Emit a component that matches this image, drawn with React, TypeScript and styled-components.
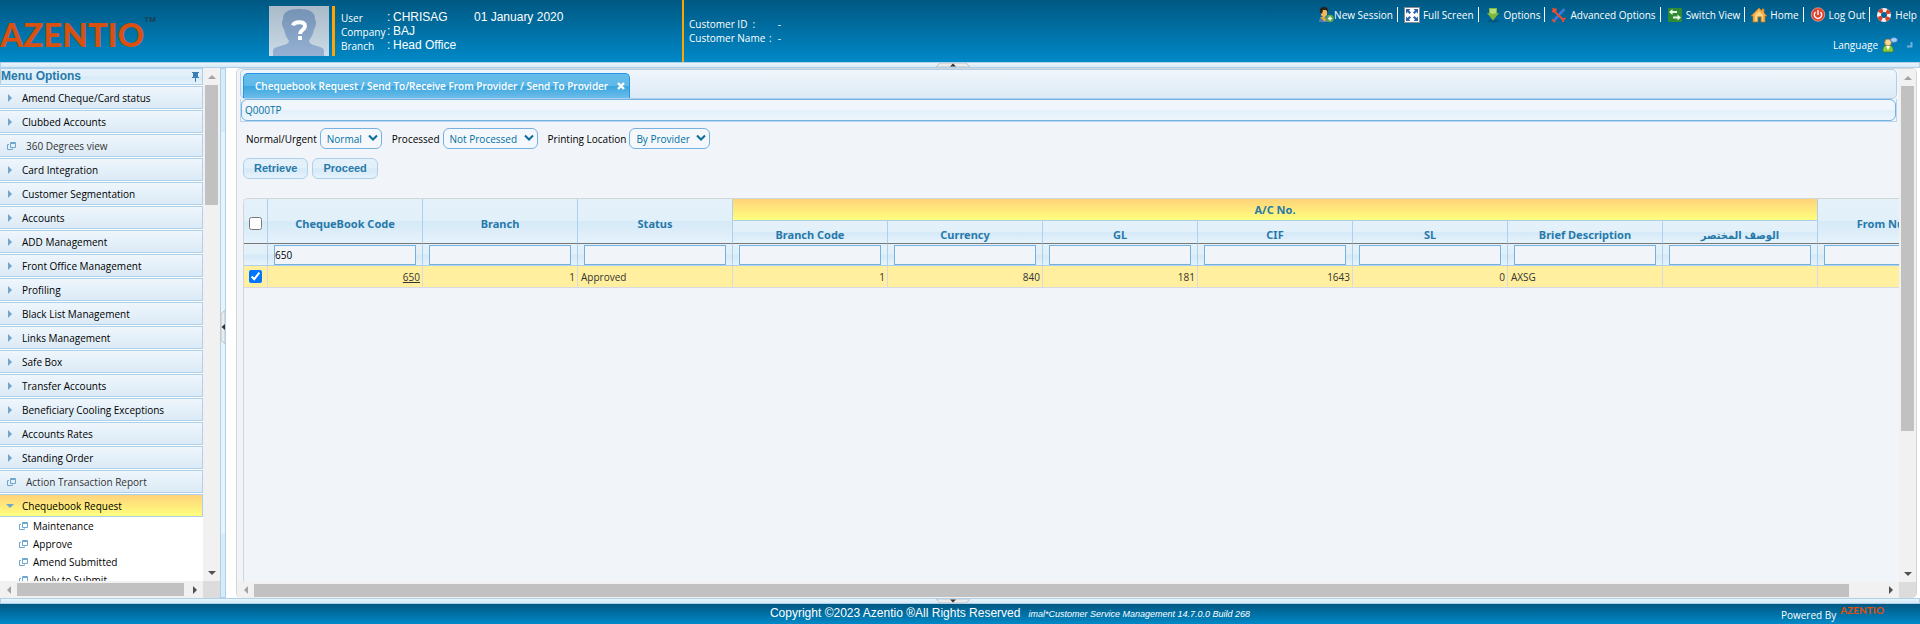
import React from "react";
import styled, { createGlobalStyle, css } from "styled-components";

const ui = `"Open Sans", "Noto Sans", sans-serif`;
const arial = `"Liberation Sans", Arial, sans-serif`;
const line = "#aed0ea";
const ink = "#2779aa";
const glass = "linear-gradient(#e4f1fb 0, #e2f0fa 48%, #d5e9f7 52%, #e6f3fc 100%)";
const bar = "linear-gradient(#005882, #0089c8)";
const hot = "linear-gradient(#ffd37a, #ffff7e)";

const Global = createGlobalStyle`
  * { box-sizing: border-box; }
  body { margin: 0; background: #fff; font: 10px/14px ${ui}; color: #000; }
  button, input, select { font: inherit; color: inherit; margin: 0; }
  a { color: inherit; text-decoration: none; }
  svg { display: block; flex: none; }
`;

const Page = styled.div`
  display: flex;
  flex-direction: column;
  height: 100vh;
  overflow: hidden;
`;

/* ---------- header ---------- */
const Header = styled.header`
  display: flex;
  height: 62px;
  flex: none;
  background: ${bar};
  color: #fff;
`;
const LogoArea = styled.div`
  display: flex;
  width: 269px;
  padding-top: 14px;
  color: #d9500f;
  font: 900 33px/40px Lato, sans-serif;
`;
const Trade = styled.span`
  color: #1d3f55;
  font: 700 8px/12px ${arial};
`;
const UserArea = styled.div`
  display: flex;
  gap: 3px;
  width: 413px;
  padding: 6px 0;
`;
const Accent = styled.div`
  width: 3px;
  background: #ffa500;
`;
const UserGrid = styled.dl`
  display: grid;
  grid-template-columns: 46px 6px 81px auto;
  grid-auto-rows: 14px;
  align-content: start;
  margin: 0;
  padding: 4px 0 0 3px;
  font: 12px/14px ${arial};
  dt { font: 500 10px/17px ${ui}; white-space: nowrap; }
  dd { margin: 0; white-space: nowrap; }
`;
const CustomerArea = styled.dl`
  display: grid;
  grid-template-columns: max-content 4px 8px;
  grid-auto-rows: 14px;
  column-gap: 3px;
  margin: 0;
  padding: 17px 0 0 5px;
  border-left: 2px solid #ffa500;
  font-weight: 500;
  dd { margin: 0; text-align: center; }
`;
const Tools = styled.div`
  display: flex;
  flex-direction: column;
  align-items: flex-end;
  margin-left: auto;
  padding: 7px 3px 0 0;
  font-weight: 500;
`;
const ToolRow = styled.nav`
  display: flex;
  height: 30px;
`;
const Tool = styled.a<{ $tight?: boolean }>`
  display: flex;
  align-items: center;
  gap: ${p => (p.$tight ? 0 : 3)}px;
  height: 15px;
  padding: 0 4px 0 6px;
  border-right: 1px solid #fff;
  white-space: nowrap;
  &:last-child { border: 0; padding-right: 0; }
`;
const LangRow = styled.a`
  display: flex;
  align-items: center;
  gap: 4px;
  padding-right: 4px;
`;

/* ---------- splitters ---------- */
const HSplit = styled.div`
  display: flex;
  justify-content: center;
  flex: none;
  height: 6px;
  padding-right: 14px;
  border: 1px solid ${line};
  background: linear-gradient(#eaf5fc, #d5e9f7);
`;
const VSplit = styled.div`
  display: flex;
  align-items: center;
  flex: none;
  width: 6px;
  padding-bottom: 12px;
  border: 1px solid ${line};
  background: linear-gradient(#d7ebf9 12%, #e8f4fc 12%, #e8f4fc 88%, #d7ebf9 88%);
`;

const Body = styled.div`
  display: flex;
  flex: 1;
  min-height: 0;
`;

/* ---------- scroll bars ---------- */
const Track = styled.div<{ $v?: boolean }>`
  display: flex;
  flex-direction: ${p => (p.$v ? "column" : "row")};
  align-items: center;
  min-width: 0;
  min-height: 0;
  background: #f1f1f1;
`;
const Thumb = styled.div<{ $v?: boolean; $share: number }>`
  background: #c1c1c1;
  ${p => (p.$v
    ? css`width: 13px; height: ${p.$share}%;`
    : css`height: 13px; width: ${p.$share}%;`)}
`;
const Run = styled.div<{ $v?: boolean }>`
  flex: 1;
  align-self: stretch;
  display: flex;
  flex-direction: ${p => (p.$v ? "column" : "row")};
  align-items: center;
`;
const ArrowBox = styled.div`
  display: grid;
  place-items: center;
  width: 17px;
  height: 17px;
  flex: none;
`;
const Corner = styled.div`
  background: #dcdcdc;
`;

/* ---------- menu ---------- */
const Side = styled.aside`
  display: grid;
  grid-template: minmax(0, 1fr) 17px / minmax(0, 1fr) 17px;
  flex: none;
  width: 220px;
`;
const MenuPane = styled.div`
  overflow: hidden;
`;
const MenuHead = styled.h2`
  display: flex;
  justify-content: space-between;
  align-items: center;
  height: 17px;
  margin: 0 0 1px;
  padding: 0 3px 0 0;
  border: 1px solid ${line};
  background: ${glass};
  color: ${ink};
  font: 700 12px/15px ${arial};
`;
const MenuItem = styled.a<{ $open?: boolean; $leaf?: boolean }>`
  display: flex;
  align-items: center;
  gap: ${p => (p.$leaf ? 10 : 8)}px;
  height: 23px;
  margin-bottom: ${p => (p.$open ? 0 : 1)}px;
  padding-left: ${p => (p.$leaf ? 7 : 6)}px;
  border: 1px solid ${line};
  border-left: 0;
  background: ${p => (p.$open ? hot : "linear-gradient(#eff6fc, #dbeaf6)")};
  color: ${p => (p.$leaf ? "#333" : "#000")};
  white-space: nowrap;
`;
const SubItem = styled.a`
  display: flex;
  align-items: center;
  gap: 5px;
  height: 18px;
  padding-left: 19px;
`;

/* ---------- work area ---------- */
const Work = styled.main`
  display: grid;
  grid-template: minmax(0, 1fr) 16px / minmax(0, 1fr) 17px;
  flex: 1;
  min-width: 0;
  margin: 0 3px 0 10px;
  border: 1px solid #d3d6d9;
  border-bottom: 0;
  border-radius: 5px;
  background: #f1f4f8;
  overflow: hidden;
`;
const Content = styled.div`
  overflow: hidden;
  padding-left: 3px;
`;
const TabBar = styled.div`
  height: 30px;
  margin-right: 2px;
  padding: 3px 0 0 2px;
  border: 1px solid ${line};
  border-radius: 5px;
  background: linear-gradient(#f0f6fb, #dbeaf6);
`;
const Tab = styled.div`
  display: inline-flex;
  align-items: center;
  gap: 9px;
  height: 25px;
  padding: 0 4px 0 11px;
  border: 1px solid #2694e8;
  border-bottom: 0;
  border-radius: 5px 5px 0 0;
  background: linear-gradient(#66bdea 0, #5fb8e8 50%, #3ba6e0 52%, #6cbdea 100%);
  color: #fff;
  font-weight: 600;
  white-space: nowrap;
`;
const Close = styled.button`
  padding: 0;
  border: 0;
  background: none;
`;
const CodeFrame = styled.div`
  margin-right: 2px;
  border: 1px solid #b9d6ee;
  border-top: 0;
`;
const CodeBar = styled.div`
  height: 22px;
  padding-left: 3px;
  border: 1px solid #74b2e2;
  border-radius: 6px;
  background: linear-gradient(#f0f6fc 48%, #e3f0fa 52%, #edf5fc);
  color: #0070a3;
  line-height: 20px;
`;
const Filters = styled.form`
  display: flex;
  align-items: center;
  flex-wrap: wrap;
  gap: 10px;
  padding: 6px 0 9px 6px;
`;
const Field = styled.label`
  display: flex;
  align-items: center;
  gap: 3px;
`;
const Pick = styled.span`
  position: relative;
  select {
    appearance: none;
    display: block;
    height: 21px;
    padding: 0 19px 0 6px;
    border: 1px solid #74b2e2;
    border-radius: 6px;
    background: #f4f8fc;
    color: #0070a3;
  }
  svg { position: absolute; right: 4px; top: 6px; pointer-events: none; }
`;
const Buttons = styled.div`
  display: flex;
  gap: 4px;
  padding: 0 0 19px 3px;
`;
const Button = styled.button`
  height: 21px;
  padding: 0 10px;
  border: 1px solid ${line};
  border-radius: 6px;
  background: ${glass};
  color: ${ink};
  font: 700 11px/19px ${arial};
`;
const GridBox = styled.div`
  margin-left: 3px;
  min-height: 100%;
  border: 1px solid #d3d6d9;
  border-right: 0;
  border-radius: 5px 0 0 0;
  overflow: hidden;
`;
const Grid = styled.table`
  table-layout: fixed;
  width: 1729px;
  border-collapse: separate;
  border-spacing: 0;
  th, td { padding: 0; overflow: hidden; white-space: nowrap; }
  input[type="checkbox"] { display: block; width: 13px; height: 13px; margin: 0 auto; }
`;
const Col = styled.col<{ $tick?: boolean }>`
  width: ${p => (p.$tick ? 24 : 155)}px;
`;
const Head = styled.th<{ $tall?: boolean; $group?: boolean }>`
  height: ${p => (p.$tall ? 45 : p.$group ? 22 : 23)}px;
  && { padding-top: ${p => (p.$group ? 0 : 4)}px; }
  border-right: 1px solid ${line};
  border-bottom: 1px solid ${p => (p.$group ? line : "#777")};
  background: ${p => (p.$group ? hot : glass)};
  color: ${ink};
  font: 700 11px/15px "Noto Sans", "DejaVu Sans Condensed", sans-serif;
  vertical-align: middle;
`;
const FilterCell = styled.td`
  height: 22px;
  border-right: 1px solid ${line};
  border-bottom: 1px solid ${line};
  background: ${glass};
  input {
    display: block;
    width: 142px;
    height: 20px;
    margin: 0 0 0 6px;
    padding: 0;
    border: 1px solid #74b2e2;
    background: #f1f4f8;
  }
`;
const Cell = styled.td<{ $right?: boolean }>`
  height: 22px;
  && { padding: 0 2px 0 3px; }
  border-right: 1px solid #d9d9e0;
  border-bottom: 1px solid #d9d9e0;
  background: #ffef9f;
  color: #333;
  text-align: ${p => (p.$right ? "right" : "left")};
  a { text-decoration: underline; }
`;
const TickCell = styled(Cell)`
  &&& { padding: 0; }
`;

/* ---------- footer ---------- */
const Footer = styled.footer`
  display: grid;
  grid-template-columns: 1fr auto 1fr;
  flex: none;
  height: 20px;
  padding-right: 36px;
  background: ${bar};
  color: #fff;
`;
const Copy = styled.div`
  grid-column: 2;
  display: flex;
  gap: 8px;
  padding-left: 136px;
  font: 12px/18px ${arial};
  white-space: nowrap;
  em { font: italic 9px/20px ${arial}; }
`;
const Powered = styled.div`
  display: flex;
  justify-content: flex-end;
  gap: 4px;
  font-weight: 500;
  line-height: 22px;
`;
const MiniLogo = styled.span`
  color: #d9500f;
  font: 900 10px/12px Lato, sans-serif;
`;

/* ---------- drawings ---------- */
const Tri = ({ d, c = "#505050" }: { d: "u" | "d" | "l" | "r"; c?: string }) => {
  const pts = { u: "0,6 4,2 8,6", d: "0,2 8,2 4,6", l: "6,0 6,8 2,4", r: "2,0 6,4 2,8" }[d];
  return <svg width="8" height="8" viewBox="0 0 8 8"><polygon points={pts} fill={c} /></svg>;
};
const WindowIcon = () => (
  <svg width="9" height="8" viewBox="0 0 9 8" fill="none" stroke="#6fa6cf" aria-hidden="true">
    <path d="M3.500 .5h5v5h-5z M3 1.500h6" /><path d="M2 2.500H.5v5h5V6.500" />
  </svg>
);
const Pin = () => (
  <svg width="7" height="10" viewBox="0 0 7 10" fill="#3a80b5"><path d="M0 0h7v1H6v4h1v1H4v4H3V6H0V5h1V1H0z" /></svg>
);
const Avatar = () => (
  <svg width="60" height="50" viewBox="0 0 60 50" role="img" aria-label="User photo">
    <defs>
      <linearGradient id="av" x2="0" y2="1"><stop stopColor="#a9bac9" /><stop offset="1" stopColor="#cbdbe7" /></linearGradient>
      <linearGradient id="hd" x2="0" y2="1"><stop stopColor="#7593b5" /><stop offset="1" stopColor="#95b0d2" /></linearGradient>
    </defs>
    <rect width="60" height="50" fill="url(#av)" />
    <path d="M14 14C13 6 20 3 30 3s17 3 16 11c2 1 1 7-1 9-1 7-4 9-5 12 1 6 15 4 15 10v5H4v-5c0-6 15-4 16-10-2-3-4-6-5-12-2-2-3-8-1-9z" fill="url(#hd)" />
    <path d="M24 19.500c1-4 12-5 12 .5 0 4-5 4-5 8" fill="none" stroke="#fff" strokeWidth="4" /><rect x="29" y="30" width="4" height="4" fill="#fff" />
  </svg>
);
const Chevron = () => (
  <svg width="10" height="8" viewBox="0 0 10 8" fill="none" stroke="#0a6c9c" strokeWidth="2"><path d="M1 1.500l4 4 4-4" /></svg>
);
const art: Record<string, React.ReactNode> = {
  session: <><path d="M1 15c0-4 2-5 5-5s5 1 5 5z" fill="#4a7fb5" /><path d="M3 3h6v5L6 11 3 8z" fill="#f3b95c" /><path d="M2 5c-1-4 2-5 4-5s5 1 3.500 5L8 3H5L4 7z" fill="#2a2118" /><path d="M2 10l5 5 1-3-3-2z" fill="#f2a52a" /><circle cx="12" cy="11.500" r="3.800" fill="#5aa84a" /><path d="M12 9.500v4M10 11.500h4" stroke="#fff" strokeWidth="1.400" /></>,
  full: <><rect x=".5" y=".5" width="15" height="15" fill="#fff" stroke="#8a8f96" /><path d="M2 2h4.500L5 3.500l2 2L5.500 7l-2-2L2 6.500zM14 2H9.500L11 3.500l-2 2L10.500 7l2-2L14 6.500zM2 14h4.500L5 12.500l2-2L5.500 9l-2 2L2 9.500zM14 14H9.500l1.500-1.500-2-2L10.500 9l2 2L14 9.500z" fill="#2c62a8" /></>,
  options: <><ellipse cx="8" cy="14" rx="6" ry="1.500" fill="#00476b" opacity=".5" /><path d="M4 1h8v5h2l-6 7.500L2 6h2z" fill="#7fb83c" /><path d="M5 2h6v4l-3 1-3-1z" fill="#b6dc7c" /></>,
  advanced: <><path d="M3 13.500L13.500 2" stroke="#3f78d8" strokeWidth="2.600" /><path d="M2 1l2 4 7.500 7 1 3M5 1.500L4 5 1 4" fill="none" stroke="#ee4c30" strokeWidth="2" /><path d="M1 12.500l3 2.500M11 13l3.500-2" stroke="#ee4c30" strokeWidth="2" /></>,
  view: <><rect x="1" y="1" width="14" height="14" rx="1" fill="#2f8b35" /><path d="M2 5l3.500-3v2H10v2H5.500v2zM14 10.500l-3.500 3v-2H6v-2h4.500v-2z" fill="#e9f8e4" /></>,
  home: <><path d="M8 1L0 9h2v6h5v-5h3v5h4V9h2l-3-3V2h-2v2z" fill="#f2ae45" stroke="#c67c1e" strokeWidth=".7" /><path d="M8 4l4 4v6h-1V9H6v5H4V8z" fill="#fbd48a" /></>,
  out: <><circle cx="8" cy="7.500" r="6.700" fill="#e2402b" stroke="#f5aa98" strokeWidth=".8" /><path d="M5.500 5a3.700 3.700 0 1 0 5 0M8 3v5" fill="none" stroke="#fff" strokeWidth="1.400" /></>,
  help: <><circle cx="8" cy="8" r="5" fill="none" stroke="#f5f5f5" strokeWidth="4" /><circle cx="8" cy="8" r="5" fill="none" stroke="#d8402a" strokeWidth="4" strokeDasharray="3.930 3.930" strokeDashoffset="-2" /></>,
  lang: <><path d="M1 15c-1-5 2-7 5-7s6 2 5 7z" fill="#8ccb48" stroke="#3f7d1d" strokeWidth=".8" /><circle cx="6" cy="5.500" r="3.400" fill="#f7d795" stroke="#a9742c" strokeWidth=".8" /><path d="M4 9l2 4 2-4z" fill="#fff" /><ellipse cx="12" cy="3" rx="3.500" ry="2.500" fill="#a9cdf5" stroke="#3b76c4" strokeWidth=".8" /></>,
};
const Icon = ({ name }: { name: string }) => <svg width="16" height="16" viewBox="0 0 16 16" aria-hidden="true">{art[name]}</svg>;
const Grip = ({ flip }: { flip?: boolean }) => (
  <svg width="34" height="4" viewBox="0 0 34 4">
    <path d={flip ? "M0 0h34l-4 4H4z" : "M4 0h26l4 4H0z"} fill="#ececec" stroke="#c4c4c4" />
    <path d={flip ? "M14 .5h6l-3 3z" : "M17 .5l3 3h-6z"} fill="#333" />
  </svg>
);
const SideGrip = () => (
  <svg width="4" height="34" viewBox="0 0 4 34">
    <path d="M4 0v34L0 30V4z" fill="#ececec" stroke="#c4c4c4" /><path d="M4 14v6l-3.500-3z" fill="#333" />
  </svg>
);

const tools: [string, string][] = [
  ["session", "New Session"], ["full", "Full Screen"], ["options", "Options"], ["advanced", "Advanced Options"],
  ["view", "Switch View"], ["home", "Home"], ["out", "Log Out"], ["help", "Help"],
];
const menu = [
  "Amend Cheque/Card status", "Clubbed Accounts", "360 Degrees view", "Card Integration", "Customer Segmentation",
  "Accounts", "ADD Management", "Front Office Management", "Profiling", "Black List Management", "Links Management",
  "Safe Box", "Transfer Accounts", "Beneficiary Cooling Exceptions", "Accounts Rates", "Standing Order",
  "Action Transaction Report", "Chequebook Request",
];
const leaves = ["360 Degrees view", "Action Transaction Report"];
const subs = ["Maintenance", "Approve", "Amend Submitted", "Apply to Submit"];
const filters = [["Normal/Urgent", "Normal"], ["Processed", "Not Processed"], ["Printing Location", "By Provider"]];
const account = ["Branch Code", "Currency", "GL", "CIF", "SL", "Brief Description", "الوصف المختصر"];
const columns = ["ChequeBook Code", "Branch", "Status", ...account, "From Number"];
const values = ["650", "1", "Approved", "1", "840", "181", "1643", "0", "AXSG", "", ""];

export default function App() {
  return (
    <Page>
      <Global />
      <Header>
        <LogoArea>AZENTIO<Trade>TM</Trade></LogoArea>
        <UserArea>
          <Avatar />
          <Accent />
          <UserGrid>
            <dt>User</dt><dd>:</dd><dd>CHRISAG</dd><dd>01 January 2020</dd>
            <dt>Company</dt><dd>:</dd><dd>BAJ</dd><dd />
            <dt>Branch</dt><dd>:</dd><dd>Head Office</dd><dd />
          </UserGrid>
        </UserArea>
        <CustomerArea>
          <dt>Customer ID &nbsp;:</dt><dd /><dd>-</dd>
          <dt>Customer Name</dt><dd>:</dd><dd>-</dd>
        </CustomerArea>
        <Tools>
          <ToolRow>
            {tools.map(([icon, label], i) => (
              <Tool key={label} href="#" $tight={i === 0}><Icon name={icon} />{label}</Tool>
            ))}
          </ToolRow>
          <LangRow href="#">
            Language<Icon name="lang" />
            <svg width="11" height="6" viewBox="0 0 11 6"><path d="M9.500 0v4.500H5" fill="none" stroke="#6fb0dc" strokeWidth="2" /></svg>
          </LangRow>
        </Tools>
      </Header>
      <HSplit><Grip /></HSplit>

      <Body>
        <Side>
          <MenuPane>
            <MenuHead>Menu Options<Pin /></MenuHead>
            {menu.map(m => {
              const leaf = leaves.includes(m);
              const open = m === "Chequebook Request";
              return (
                <MenuItem key={m} href="#" $leaf={leaf} $open={open}>
                  {leaf ? <WindowIcon /> : <Tri d={open ? "d" : "r"} c="#6fa6cf" />}{m}
                </MenuItem>
              );
            })}
            {subs.map(s => <SubItem key={s} href="#"><WindowIcon />{s}</SubItem>)}
          </MenuPane>
          <Track $v>
            <ArrowBox><Tri d="u" c="#a3a3a3" /></ArrowBox>
            <Run $v><Thumb $v $share={25} /></Run>
            <ArrowBox><Tri d="d" /></ArrowBox>
          </Track>
          <Track>
            <ArrowBox><Tri d="l" c="#a3a3a3" /></ArrowBox>
            <Run><Thumb $share={99} /></Run>
            <ArrowBox><Tri d="r" /></ArrowBox>
          </Track>
          <Corner />
        </Side>
        <VSplit><SideGrip /></VSplit>

        <Work>
          <Content>
            <TabBar>
              <Tab>
                Chequebook Request / Send To/Receive From Provider / Send To Provider
                <Close aria-label="Close tab">
                  <svg width="8" height="8" viewBox="0 0 8 8" stroke="#fff" strokeWidth="2.400"><path d="M1 1l6 6M7 1L1 7" /></svg>
                </Close>
              </Tab>
            </TabBar>
            <CodeFrame><CodeBar>Q000TP</CodeBar></CodeFrame>
            <Filters>
              {filters.map(([label, value]) => (
                <Field key={label}>
                  {label}
                  <Pick><select defaultValue={value}><option>{value}</option></select><Chevron /></Pick>
                </Field>
              ))}
            </Filters>
            <Buttons><Button>Retrieve</Button><Button>Proceed</Button></Buttons>
            <GridBox>
              <Grid>
                <colgroup><Col $tick />{columns.map(c => <Col key={c} />)}</colgroup>
                <thead>
                  <tr>
                    <Head rowSpan={2} $tall><input type="checkbox" aria-label="Select all" /></Head>
                    {columns.slice(0, 3).map(c => <Head key={c} rowSpan={2} $tall>{c}</Head>)}
                    <Head colSpan={7} $group>A/C No.</Head>
                    <Head rowSpan={2} $tall>From Number</Head>
                  </tr>
                  <tr>{account.map(c => <Head key={c}>{c}</Head>)}</tr>
                </thead>
                <tbody>
                  <tr>
                    <FilterCell />
                    {columns.map((c, i) => (
                      <FilterCell key={c}><input aria-label={`Filter ${c}`} defaultValue={i === 0 ? "650" : ""} /></FilterCell>
                    ))}
                  </tr>
                  <tr>
                    <TickCell><input type="checkbox" defaultChecked aria-label="Select row" /></TickCell>
                    {values.map((v, i) => (
                      <Cell key={columns[i]} $right={/^\d/.test(v)}>{i === 0 ? <a href="#">{v}</a> : v}</Cell>
                    ))}
                  </tr>
                </tbody>
              </Grid>
            </GridBox>
          </Content>
          <Track $v>
            <ArrowBox><Tri d="u" c="#a3a3a3" /></ArrowBox>
            <Run $v><Thumb $v $share={72} /></Run>
            <ArrowBox><Tri d="d" /></ArrowBox>
          </Track>
          <Track>
            <ArrowBox><Tri d="l" c="#a3a3a3" /></ArrowBox>
            <Run><Thumb $share={98} /></Run>
            <ArrowBox><Tri d="r" /></ArrowBox>
          </Track>
          <Corner />
        </Work>
      </Body>

      <HSplit><Grip flip /></HSplit>
      <Footer>
        <Copy>Copyright ©2023 Azentio ®All Rights Reserved <em>imal*Customer Service Management 14.7.0.0 Build 268</em></Copy>
        <Powered>Powered By <MiniLogo>AZENTIO</MiniLogo></Powered>
      </Footer>
    </Page>
  );
}
